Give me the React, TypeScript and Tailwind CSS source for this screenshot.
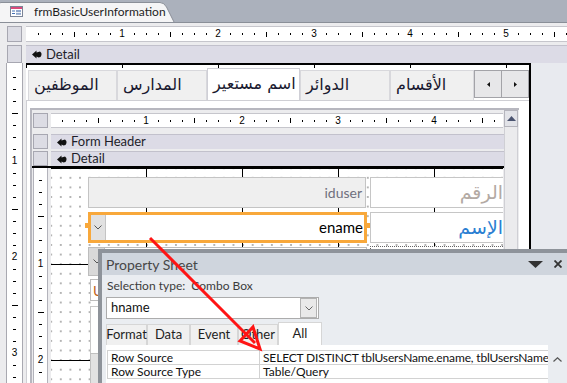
import React from 'react'

const ui = "font-['Lato','Liberation_Sans',sans-serif]"
const ar = "font-['DejaVu_Sans',sans-serif]"

// canvas background: inch lines every 96px plus the dotted grid
const gridBg =
  "bg-white [background-image:linear-gradient(to_right,#000_1px,transparent_1px),linear-gradient(to_bottom,#000_1px,transparent_1px),radial-gradient(circle,#444_0.5px,transparent_0.8px)] [background-size:96px_96px,96px_96px,9.6px_9.6px] [background-position:95px_0,0_96px,5px_5px]"

function HRuler({ count, className }: { count: number; className: string }) {
  return (
    <div className={`flex h-full items-center ${className}`}>
      {Array.from({ length: count }, (_, i) => (
        <div key={i} className="w-[12px] shrink-0 flex items-center justify-center">
          {i === 0 ? null : i % 8 === 0 ? (
            <span className="text-[10px] leading-none text-black font-['Liberation_Sans',sans-serif]">{i / 8}</span>
          ) : i % 4 === 0 ? (
            <span className="w-px h-[5px] bg-black" />
          ) : (
            <span className="w-px h-[2px] bg-black" />
          )}
        </div>
      ))}
    </div>
  )
}

function VRuler({ count, className }: { count: number; className: string }) {
  return (
    <div className={`flex flex-col w-full items-center ${className}`}>
      {Array.from({ length: count }, (_, i) => (
        <div key={i} className="h-[12px] w-full shrink-0 flex items-center justify-center">
          {i === 0 ? null : i % 8 === 0 ? (
            <span className="text-[10px] leading-none text-black font-['Liberation_Sans',sans-serif]">{i / 8}</span>
          ) : i % 4 === 0 ? (
            <span className="w-[6px] h-px bg-black" />
          ) : (
            <span className="w-[3px] h-px bg-black" />
          )}
        </div>
      ))}
    </div>
  )
}

function Corner({ className = '' }: { className?: string }) {
  return <div className={`h-full bg-[#dcdce4] border border-[#a7a7b1] ${className}`} />
}

function SectionIcon() {
  return (
    <svg width="10" height="9" viewBox="0 0 10 9">
      <path d="M0 4.5 L4.5 0.5 L4.5 2.5 L8 1.5 Q10 2.5 9.5 5 Q9 7.5 6.5 7.5 L4.5 6.5 L4.5 8.5 Z" fill="#111" />
    </svg>
  )
}

function SectionBar({ label, className = '' }: { label: string; className?: string }) {
  return (
    <div
      className={`flex-1 h-full bg-[#dcdbe6] border-t border-[#c2c1cc] flex items-center pl-[6px] gap-[4px] text-[13px] text-[#1e1e2a] ${className}`}
    >
      <SectionIcon />
      {label}
    </div>
  )
}

function FormIcon() {
  return (
    <svg width="13" height="11" viewBox="0 0 13 11">
      <rect x="0.5" y="0.5" width="12" height="10" fill="#fff" stroke="#7b8396" />
      <rect x="1" y="1" width="11" height="2" fill="#d94a7b" />
      <rect x="2" y="4.5" width="3" height="1" fill="#4470b4" />
      <rect x="2" y="7" width="3" height="1" fill="#4470b4" />
      <rect x="6" y="4" width="5" height="2" fill="#8fa6cc" />
      <rect x="6" y="6.8" width="5" height="2" fill="#8fa6cc" />
    </svg>
  )
}

function Chevron({ color = '#555' }: { color?: string }) {
  return (
    <svg width="8" height="5" viewBox="0 0 8 5">
      <path d="M0.5 0.5 L4 4 L7.5 0.5" fill="none" stroke={color} strokeWidth="1" />
    </svg>
  )
}

function FormTab({ label, className, selected }: { label: string; className: string; selected?: boolean }) {
  return (
    <div
      className={`${className} shrink-0 flex items-center pl-[5px] pb-[2px] ${ar} text-[16px] text-[#1a1a30] border border-b-0 ${
        selected ? 'h-[32px] bg-white border-[#cfcfd6]' : 'h-[30px] bg-[#f0f0f0] border-[#d8d8dc]'
      }`}
    >
      {label}
    </div>
  )
}

function DesignCanvas() {
  return (
    <div className={`relative ml-[3px] w-[452px] overflow-hidden ${gridBg}`}>
      {/* iduser */}
      <div className="absolute left-[37px] top-[9px] w-[278px] h-[31px] bg-[#efefef] border border-[#c4c4c4] flex items-center justify-end pr-[3px] text-[14px] text-[#6f6f7e]">
        iduser
      </div>
      <div className={`absolute left-[319px] top-[9px] w-[135px] h-[31px] bg-white border border-[#c6c6c6] flex items-center justify-end pr-[1px] ${ar} text-[19px] text-[#b3aaa4]`}>
        الرقم
      </div>

      {/* ename combo, selected */}
      <div className="absolute left-[37px] top-[44px] w-[279px] h-[31px] bg-white border-[3px] border-[#f8a83b] flex items-center">
        <div className="w-[15px] h-full bg-[#e1e1e1] border-r border-[#c4c4c4] flex items-center justify-center">
          <Chevron />
        </div>
        <div className="flex-1 text-right pr-[1px] text-[15px] text-black">ename</div>
      </div>
      <div className="absolute left-[34px] top-[55px] w-[3px] h-[5px] bg-[#f8a83b]" />
      <div className="absolute left-[316px] top-[55px] w-[3px] h-[5px] bg-[#f8a83b]" />
      <div className={`absolute left-[319px] top-[44px] w-[135px] h-[31px] bg-white border border-[#c6c6c6] flex items-center justify-end pr-[1px] ${ar} text-[19px] text-[#2b7fd2]`}>
        الإسم
      </div>

      {/* controls further down, mostly under the property sheet */}
      <div className="absolute left-[37px] top-[79px] w-[279px] h-[29px] bg-white border border-[#bdbdbd] flex">
        <div className="w-[16px] h-full bg-[#d9d9d9] border-r border-[#bdbdbd] flex items-center justify-center">
          <Chevron />
        </div>
      </div>
      <div className="absolute left-[319px] top-[78px] w-[135px] h-[29px] bg-white border border-dotted border-[#666]" />
      <div className="absolute left-[39px] top-[111px] w-[200px] h-[22px] bg-white border border-[#bdbdbd] flex items-center pl-[2px] text-[14px] text-[#c0621a]">
        U
      </div>
      <div className="absolute left-[39px] top-[138px] w-[200px] h-[48px] bg-white border border-[#c8c8c8]" />
      <div className="absolute left-[39px] top-[185px] w-[200px] h-[40px] bg-[#e2e2e2] border border-[#c0c0c0]" />
    </div>
  )
}

function Subform() {
  return (
    <div className="w-[489px] bg-[#ececee] border-l-2 border-t-2 border-[#b7b7bf] flex">
      <div className="w-[472px] flex flex-col">
        <div className="mt-[3px] h-[15px] flex shrink-0">
          <Corner className="ml-[1px] w-[15px]" />
          <div className="ml-[3px] w-[452px] bg-white border-y border-[#c6c6cc] overflow-hidden">
            <HRuler count={40} className="-ml-[7px]" />
          </div>
        </div>
        <div className="mt-[6px] h-[15px] flex shrink-0">
          <Corner className="ml-[1px] w-[15px]" />
          <SectionBar label="Form Header" className="ml-[3px]" />
        </div>
        <div className="mt-[2px] h-[15px] flex shrink-0">
          <Corner className="ml-[1px] w-[15px]" />
          <SectionBar label="Detail" className="ml-[3px]" />
        </div>
        <div className="flex-1 flex border-t-2 border-black min-h-0">
          <div className="ml-[1px] w-[15px] bg-white border-x border-[#b3b3bb] overflow-hidden">
            <VRuler count={19} className="-mt-[6px]" />
          </div>
          <DesignCanvas />
        </div>
      </div>
      <div className="w-[14px] flex flex-col">
        <div className="h-[17px] bg-[#e2e3e8] border border-[#b4b4bc] flex items-center justify-center">
          <svg width="9" height="5" viewBox="0 0 9 5">
            <path d="M0 5 L4.5 0 L9 5 Z" fill="#4b5470" />
          </svg>
        </div>
        <div className="flex-1 bg-[#ebebed] border-x border-[#cfcfd4]" />
      </div>
    </div>
  )
}

function PropertySheet() {
  const tabs = [
    { label: 'Format', w: 'w-[41px]' },
    { label: 'Data', w: 'w-[43px]' },
    { label: 'Event', w: 'w-[48px]' },
    { label: 'Other', w: 'w-[40px]' },
  ]
  return (
    <div className={`absolute left-[98px] top-[249px] w-[469px] h-[134px] border-l-4 border-t-4 border-[#8e939a] bg-[#eaedf1] flex flex-col ${ui}`}>
      <div className="h-[22px] shrink-0 bg-[#cfd5dd] flex items-center pl-[4px] pr-[5px] text-[14px] text-[#474747]">
        Property Sheet
        <div className="ml-auto flex items-center gap-[11px]">
          <svg width="15" height="7" viewBox="0 0 15 7">
            <path d="M0 0 H15 L7.5 7 Z" fill="#333" />
          </svg>
          <svg width="8" height="8" viewBox="0 0 8 8">
            <path d="M0.5 0.5 L7.5 7.5 M7.5 0.5 L0.5 7.5" stroke="#333" strokeWidth="1.8" />
          </svg>
        </div>
      </div>
      <div className="pl-[4px] flex flex-col flex-1 min-h-0">
        <div className="mt-[3px] h-[15px] leading-[15px] text-[12px] text-[#3c3c3c] whitespace-pre pl-[1px]">
          {'Selection type:  Combo Box'}
        </div>
        <div className="mt-[4px] w-[213px] h-[22px] shrink-0 bg-white border border-[#acacac] flex items-center">
          <span className="flex-1 pl-[4px] text-[13px] text-[#111]">hname</span>
          <div className="w-[17px] h-[20px] mr-px bg-[#e9e9e9] border border-[#b3b3b3] flex items-center justify-center">
            <Chevron color="#666" />
          </div>
        </div>
        <div className="mt-[3px] h-[23px] shrink-0 flex items-end">
          {tabs.map((t) => (
            <div
              key={t.label}
              className={`${t.w} h-[21px] bg-[#f0f0f0] border border-b-0 border-[#d6d6d6] flex items-center justify-center text-[13px] text-[#1e1e1e]`}
            >
              {t.label}
            </div>
          ))}
          <div className="w-[44px] h-[23px] bg-white border border-b-0 border-[#d6d6d6] flex items-center justify-center text-[13px] text-[#1e1e1e]">
            All
          </div>
        </div>
        <div className="flex-1 flex min-h-0">
          <div className="w-[442px] bg-white pt-[5px] pl-px overflow-hidden">
            <div className="border-t border-l border-[#d2d2d2] text-[12px] text-[#111]">
              <div className="h-[14px] flex border-b border-[#d2d2d2]">
                <div className="w-[152px] shrink-0 border-r border-[#d2d2d2] pl-[3px] leading-[13px]">Row Source</div>
                <div className="pl-[3px] leading-[13px] whitespace-nowrap tracking-[-0.15px]">
                  SELECT DISTINCT tblUsersName.ename, tblUsersName.jobtitle FROM tblUsersName;
                </div>
              </div>
              <div className="h-[14px] flex border-b border-[#d2d2d2]">
                <div className="w-[152px] shrink-0 border-r border-[#d2d2d2] pl-[3px] leading-[13px]">Row Source Type</div>
                <div className="pl-[3px] leading-[13px]">Table/Query</div>
              </div>
            </div>
          </div>
          <div className="flex-1 flex justify-center pt-[12px]">
            <svg width="9" height="5" viewBox="0 0 9 5">
              <path d="M0.5 4.5 L4.5 0.8 L8.5 4.5" fill="none" stroke="#555" strokeWidth="1.2" />
            </svg>
          </div>
        </div>
      </div>
    </div>
  )
}

export default function App() {
  return (
    <div className={`relative w-[567px] h-[383px] overflow-hidden bg-[#abb1bc] ${ui}`}>
      {/* document tab */}
      <div className="h-[22px] flex items-end">
        <div className="relative w-[176px] h-[21px]">
          <svg className="absolute inset-0" width="176" height="21" viewBox="0 0 176 21">
            <path d="M-1 21 V3.5 Q-1 1.5 1 1.5 H160 Q164 1.5 166.5 6 L174 21" fill="#f5f5f6" stroke="#8a8f98" />
          </svg>
          <div className="relative h-full flex items-center pl-[10px] gap-[11px] text-[12px] text-[#1f1f1f]">
            <FormIcon />
            frmBasicUserInformation
          </div>
        </div>
      </div>

      <div className="h-[361px] border-t border-[#8a8f98] bg-[#ececee] flex flex-col">
        <div className="mt-[3px] h-[16px] flex shrink-0">
          <Corner className="ml-[7px] w-[15px]" />
          <div className="ml-[4px] flex-1 bg-white border-y border-[#c6c6cc] overflow-hidden">
            <HRuler count={47} className="-ml-[6px]" />
          </div>
        </div>
        <div className="mt-[3px] h-[18px] flex shrink-0">
          <Corner className="ml-[7px] w-[15px]" />
          <SectionBar label="Detail" className="ml-[4px]" />
        </div>

        <div className="flex-1 flex min-h-0">
          <div className="ml-[6px] w-[17px] bg-white border-x border-[#a9a9b1] overflow-hidden">
            <VRuler count={28} className="-mt-[4px]" />
          </div>
          <div className="ml-[3px] w-[503px] bg-white border-t-2 border-black flex flex-col min-h-0">
            <div className="h-[3px] shrink-0 [background-image:linear-gradient(to_right,#000_1px,transparent_1px)] [background-size:96px_100%] [background-position:96px_0]" />
            <div className="h-[32px] shrink-0 flex items-end pl-[2px]">
              <FormTab label="الموظفين" className="w-[89px]" />
              <FormTab label="المدارس" className="w-[90px]" />
              <FormTab label="اسم مستعير" className="w-[93px]" selected />
              <FormTab label="الدوائر" className="w-[90px]" />
              <FormTab label="الأقسام" className="w-[84px]" />
              <div className="w-[28px] h-[28px] mb-[2px] bg-[#e7e7e9] border border-[#a3a3a8] flex items-center justify-center">
                <svg width="3" height="5" viewBox="0 0 3 5"><path d="M3 0 L0 2.5 L3 5 Z" fill="#111" /></svg>
              </div>
              <div className="w-[27px] h-[28px] mb-[2px] bg-[#e7e7e9] border border-l-0 border-[#a3a3a8] flex items-center justify-center">
                <svg width="3" height="5" viewBox="0 0 3 5"><path d="M0 0 L3 2.5 L0 5 Z" fill="#111" /></svg>
              </div>
            </div>
            <div className="flex-1 bg-white border-l border-t border-[#cfcfd4] pl-[3px] pt-[7px] flex min-h-0">
              <Subform />
            </div>
          </div>
          <div className="flex-1 bg-[#e8eaef] border-l-2 border-black" />
        </div>
      </div>

      <PropertySheet />

      {/* red annotation arrow */}
      <svg className="absolute left-0 top-0 pointer-events-none" width="567" height="383" viewBox="0 0 567 383">
        <line x1="150" y1="238" x2="255" y2="343" stroke="#ff1414" strokeWidth="3" />
        <path d="M240 341 L253 327 L260 349 Z" fill="none" stroke="#ff1414" strokeWidth="3" strokeLinejoin="miter" />
      </svg>
    </div>
  )
}
